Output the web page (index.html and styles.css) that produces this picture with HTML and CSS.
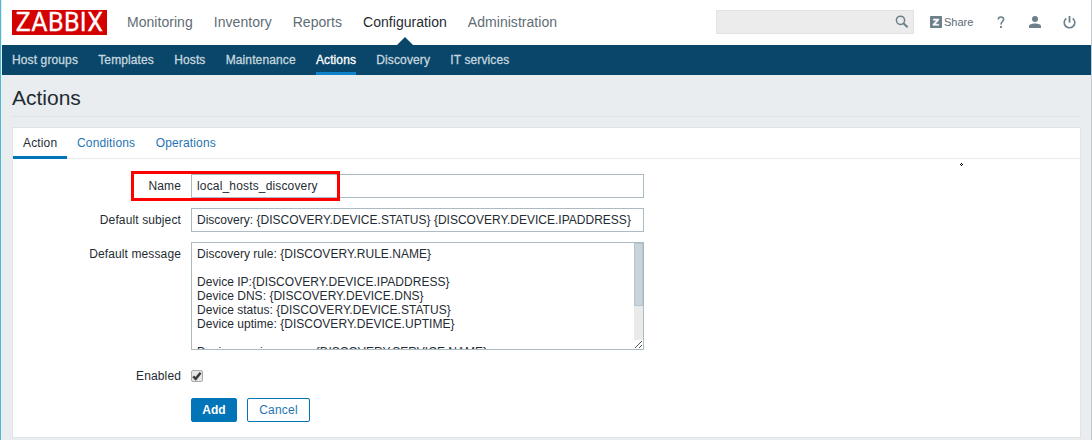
FILE: index.html
```html
<!DOCTYPE html>
<html lang="en">
<head>
<meta charset="utf-8">
<title>Configuration of actions</title>
<link rel="stylesheet" href="styles.css">
</head>
<body>
<div class="window">
  <header class="top">
    <div class="logo">ZABBIX</div>
    <nav class="main-nav">
      <a>Monitoring</a><a>Inventory</a><a>Reports</a><a class="current">Configuration</a><a>Administration</a>
    </nav>
    <div class="search">
      <svg width="14" height="14" viewBox="0 0 14 14" fill="none" stroke="#6c7f8b"><circle cx="5.5" cy="5.3" r="4.1" stroke-width="1.5"/><path d="M8.4 8.2 12.6 12.2" stroke-width="2"/></svg>
    </div>
    <a class="share"><svg width="12" height="12" viewBox="0 0 12 12"><rect width="12" height="12" rx=".7" fill="#6c7f8b"/><path d="M3.3 3H8.8V4L5 8.2H8.7V9.3H3V8.3L6.8 4.2H3.3Z" fill="#fff" stroke="#fff" stroke-width=".6"/></svg>Share</a>
    <svg class="icon help" width="8" height="13" viewBox="0 0 8 13"><path d="M1.2 3.6C1.2 1.8 2.3 1 3.9 1S6.6 1.9 6.6 3.3C6.6 5.4 4 5.6 4 8.5" fill="none" stroke="#6c7f8b" stroke-width="1.6"/><rect x="3.1" y="10" width="1.8" height="2" fill="#6c7f8b"/></svg>
    <svg class="icon user" width="12" height="12" viewBox="0 0 12 12" fill="#6c7f8b"><circle cx="6" cy="3" r="3"/><path d="M0 12V10.2C0 8.5 3 7.6 6 7.6S12 8.5 12 10.2V12Z"/></svg>
    <svg class="icon power" width="13" height="13" viewBox="0 0 13 13" fill="none" stroke="#6c7f8b"><path d="M3.3 2.3A5.3 5.3 0 1 0 9.7 2.3" stroke-width="1.6"/><path d="M6.5 0V6.6" stroke-width="1.8"/></svg>
  </header>
  <nav class="sub-nav">
    <a>Host groups</a><a>Templates</a><a>Hosts</a><a>Maintenance</a><a class="current">Actions</a><a>Discovery</a><a>IT services</a>
  </nav>
  <main>
    <h1>Actions</h1>
    <section class="panel">
      <div class="tabs"><a class="current">Action</a><a>Conditions</a><a>Operations</a></div>
      <form class="form">
        <div class="row"><label>Name</label><div class="field">local_hosts_discovery</div><span class="highlight"></span></div>
        <div class="row"><label>Default subject</label><div class="field subject">Discovery: {DISCOVERY.DEVICE.STATUS} {DISCOVERY.DEVICE.IPADDRESS}</div></div>
        <div class="row"><label>Default message</label>
          <div class="message">
            <div class="lines">
              <p>Discovery rule: {DISCOVERY.RULE.NAME}</p>
              <p>&nbsp;</p>
              <p>Device IP:{DISCOVERY.DEVICE.IPADDRESS}</p>
              <p>Device DNS: {DISCOVERY.DEVICE.DNS}</p>
              <p>Device status: {DISCOVERY.DEVICE.STATUS}</p>
              <p>Device uptime: {DISCOVERY.DEVICE.UPTIME}</p>
              <p>&nbsp;</p>
              <p>Device service name: {DISCOVERY.SERVICE.NAME}</p>
            </div>
            <div class="scrollbar"><div class="thumb"></div><svg class="grip" width="9" height="9" viewBox="0 0 9 9" shape-rendering="crispEdges"><path d="M0 0H9V9H0Z" fill="#fff"/><path d="M1 8 8 1M5 8 8 5" stroke="#555"/></svg></div>
          </div>
        </div>
        <div class="row enabled"><label>Enabled</label><span class="check"><svg width="10" height="10" viewBox="0 0 10 10"><path d="M1.2 5.3 3.7 7.8 8.6 1.7" fill="none" stroke="#3c3c3c" stroke-width="2.5"/></svg></span></div>
        <div class="actions"><button type="button" class="add">Add</button><button type="button" class="cancel">Cancel</button></div>
      </form>
    </section>
  </main>
  <svg class="cursor" width="3" height="3" viewBox="0 0 3 3" shape-rendering="crispEdges"><path d="M1 0h1v1H1zM0 1h1v1H0zM2 1h1v1H2zM1 2h1v1H1z"/></svg>
</div>
</body>
</html>
```
FILE: styles.css
```css
* { box-sizing: border-box; }
body { margin: 0; font: 12px/14px "Liberation Sans", Arial, sans-serif; color: #1f2c33; background: #e9edf0; }
p, h1 { margin: 0; }
.window { position: relative; height: 440px; overflow: hidden; border-left: 1px solid #4bb9cf; border-right: 1px solid #c5cacd; padding-left: 1px; }
.top { display: flex; align-items: center; height: 45px; padding: 0 15px 0 10px; background: #fff; }
.logo { width: 95px; height: 25px; background: #d40000; color: #fff; font: 25px/26px Roboto, sans-serif; text-align: center; letter-spacing: .4px; white-space: nowrap; -webkit-text-stroke: .3px; }
.main-nav { display: flex; gap: 21px; margin-left: 20px; font-size: 14px; line-height: 45px; color: #5f6d75; letter-spacing: .04px; }
.main-nav .current { position: relative; color: #1f2c33; }
.main-nav .current::after { content: ""; position: absolute; left: 50%; bottom: 0; margin-left: -8px; border: 8px solid transparent; border-top: 0; border-bottom-color: #0a466a; }
.search { display: flex; align-items: center; justify-content: flex-end; width: 198px; height: 24px; margin-left: auto; padding-right: 4px; border: 1px solid #dfe4e7; background: #ececec; }
.share { display: flex; align-items: center; gap: 2px; margin-left: 16px; width: 44px; color: #5b6b75; font-size: 11px; }
.icon { flex: none; }
.help { margin-left: 23px; }
.user { margin-left: 24px; }
.power { margin-left: 22px; }
.search, .share, .icon { margin-top: -1px; }
.sub-nav { display: flex; gap: 20.2px; height: 30px; padding-left: 10px; background: #0a466a; color: #c5d6df; line-height: 30px; letter-spacing: .12px; -webkit-text-stroke: .3px; }
.sub-nav .current { color: #fff; border-bottom: 3px solid #0f83c9; }
main { padding: 0 10px; }
h1 { height: 42px; border-bottom: 1px solid #dfe4e7; font-size: 21px; font-weight: 400; line-height: 46px; }
.panel { height: 311px; margin-top: 10px; background: #fff; border: 1px solid #dfe4e7; }
.tabs { display: flex; height: 31px; border-bottom: 1px solid #e6ebee; line-height: 30px; color: #1f75b4; letter-spacing: .15px; }
.tabs a { height: 31px; padding: 0 10px; margin-right: .5px; }
.tabs .current { width: 54px; margin-right: 0; border-bottom: 3px solid #0275b8; color: #1f2c33; }
.form { display: flex; flex-direction: column; gap: 10px; padding: 15px 0 0; }
.row { position: relative; display: flex; }
label { width: 168px; margin-right: 10px; text-align: right; line-height: 24px; letter-spacing: .12px; }
.field { width: 453px; height: 24px; padding: 0 5px; border: 1px solid #acbbc2; line-height: 22px; white-space: nowrap; letter-spacing: .16px; }
.subject { letter-spacing: .01px; }
.highlight { position: absolute; left: 118px; top: -3px; width: 209px; height: 30px; border: 3px solid #f00; }
.message { display: flex; width: 453px; height: 108px; border: 1px solid #acbbc2; overflow: hidden; }
.lines { flex: 1; padding: 4px 5px; white-space: nowrap; letter-spacing: .03px; }
.scrollbar { display: flex; flex-direction: column; width: 9px; background: #eaeaea; }
.thumb { height: 63px; border: 1px solid #b6c5cc; background: #c9d4da; }
.grip { margin-top: auto; }
.enabled { height: 28px; align-items: center; margin-top: 2px; }
.check { display: grid; place-items: center; width: 12px; height: 12px; border: 1px solid #aaa; border-radius: 2px; background: #e6e6e6; margin-top: -1px; }
.actions { display: flex; gap: 10px; margin: -2px 0 0 178px; }
button { height: 24px; padding: 0; border: 1px solid #0275b8; border-radius: 2px; font: 12px/14px "Liberation Sans", Arial, sans-serif; }
.add { width: 46px; background: #0275b8; color: #fff; font-weight: 700; }
.cancel { width: 63px; background: #fff; color: #1f75b4; letter-spacing: .2px; }
.cursor { position: absolute; left: 959px; top: 163px; }
```
